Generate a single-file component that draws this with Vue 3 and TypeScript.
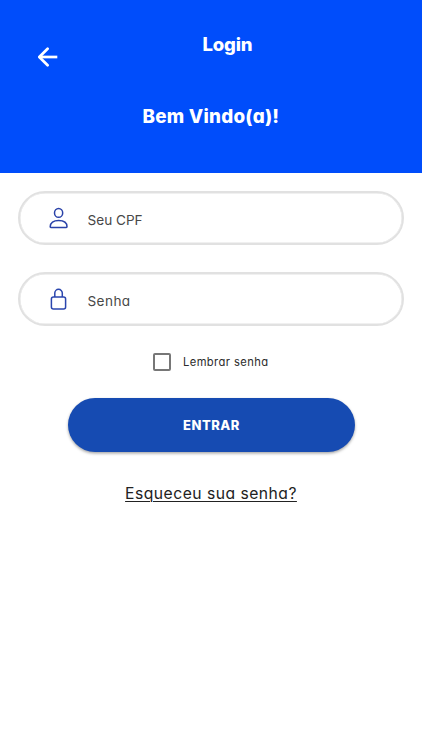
<script setup lang="ts">
import { ref } from 'vue'

const cpf = ref('')
const password = ref('')
const remember = ref(false)
</script>

<template>
  <main class="screen">
    <header class="hero">
      <button class="back" type="button" aria-label="Voltar">
        <svg width="20" height="20" viewBox="0 0 20 20" fill="none" stroke="#fff" stroke-width="2.7">
          <path d="M19.3 10H2" />
          <path d="M9.6 1.7 1.3 10l8.3 8.3" stroke-linecap="round" stroke-linejoin="round" />
        </svg>
      </button>
      <div class="titles">
        <h1 class="title">Login</h1>
        <p class="welcome">Bem Vindo(a)!</p>
      </div>
    </header>

    <form class="form" @submit.prevent>
      <label class="field">
        <svg class="icon" width="20" height="22" viewBox="0 0 20 22" fill="none" stroke="#2a42a8" stroke-width="1.5">
          <ellipse cx="9.6" cy="5.9" rx="4.1" ry="4.4" />
          <path d="M1.2 19.8c0-4.1 3.3-6.3 8.4-6.3s8.4 2.2 8.4 6.3c0 .5-.2.7-.7.7H1.9c-.5 0-.7-.2-.7-.7Z" />
        </svg>
        <input v-model="cpf" class="input" type="text" placeholder="Seu CPF" />
      </label>
      <label class="field">
        <svg class="icon" width="20" height="22" viewBox="0 0 20 22" fill="none" stroke="#2a46ae" stroke-width="1.5">
          <rect x="2.4" y="9.1" width="14.2" height="11.8" rx="2" />
          <path d="M5.8 9V5.1a3.75 3.75 0 0 1 7.5 0V9" />
        </svg>
        <input v-model="password" class="input password" type="password" placeholder="Senha" />
      </label>

      <label class="remember">
        <input v-model="remember" class="check" type="checkbox" />
        <span class="remember-text">Lembrar senha</span>
      </label>

      <button class="submit" type="submit">ENTRAR</button>
      <a class="forgot" href="#">Esqueceu sua senha?</a>
    </form>
  </main>
</template>

<style>
body {
  background: #fff;
}
</style>

<style scoped>
.screen {
  box-sizing: border-box;
  min-height: 750px;
  background: #fff;
  font-family: Inter, 'Liberation Sans', sans-serif;
  font-feature-settings: 'cv11' 1;
}
.hero {
  box-sizing: border-box;
  display: grid;
  grid-template-columns: 37.5px 20px 1fr;
  height: 173px;
  background: #004dfb;
  color: #fff;
}
.back {
  grid-column: 2;
  width: 20px;
  height: 20px;
  margin: 46.5px 0 0;
  padding: 0;
  border: 0;
  background: none;
}
.back svg {
  display: block;
}
.titles {
  display: flex;
  flex-direction: column;
  align-items: flex-start;
  gap: 49px;
  padding-top: 32px;
}
.title,
.welcome {
  margin: 0;
  font-size: 18.5px;
  line-height: 24px;
  font-weight: 800;
  white-space: nowrap;
}
.title {
  padding-left: 145px;
  letter-spacing: -0.2px;
}
.welcome {
  padding-left: 85px;
  font-size: 18.8px;
  letter-spacing: 0.25px;
}
.form {
  display: flex;
  flex-direction: column;
  align-items: center;
  padding: 18px 18px 0;
}
.field {
  box-sizing: border-box;
  display: flex;
  align-items: center;
  gap: 19px;
  width: 386px;
  height: 54px;
  margin-bottom: 27px;
  padding-left: 28.5px;
  border: 2px solid #e1e1e1;
  border-radius: 27px;
  box-shadow: inset 0 0 0 0.5px #e1e1e1;
}
.input {
  width: 260px;
  padding: 3px 0 0;
  border: 0;
  outline: 0;
  background: none;
  font: inherit;
  font-feature-settings: inherit;
  font-size: 13.6px;
  color: #444;
}
.password {
  letter-spacing: 0.4px;
}
.input::placeholder {
  color: #484848;
  opacity: 1;
}
.remember {
  display: flex;
  align-items: center;
  gap: 12px;
  width: 116px;
  height: 18px;
}
.check {
  appearance: none;
  box-sizing: border-box;
  flex: none;
  width: 18px;
  height: 18px;
  margin: 0;
  border: 2px solid #777;
  border-radius: 2px;
}
.check:checked {
  background: #164bb2;
}
.remember-text {
  font-size: 11.2px;
  letter-spacing: 0.4px;
  color: #2c2c2c;
  white-space: nowrap;
}
.submit {
  width: 287px;
  height: 54px;
  margin: 27px 0 0 1px;
  padding: 0;
  border: 0;
  border-radius: 27px;
  background: #164bb2;
  box-shadow: 0 1.5px 3px rgba(0, 0, 0, 0.35);
  color: #fff;
  font: inherit;
  font-size: 13px;
  font-weight: 800;
  letter-spacing: 0.5px;
}
.forgot {
  margin-top: 30px;
  font-size: 15.7px;
  letter-spacing: 0.48px;
  line-height: 24px;
  color: #222;
  text-decoration: underline;
  text-decoration-thickness: 1px;
  text-underline-offset: 2px;
  white-space: nowrap;
}
</style>
